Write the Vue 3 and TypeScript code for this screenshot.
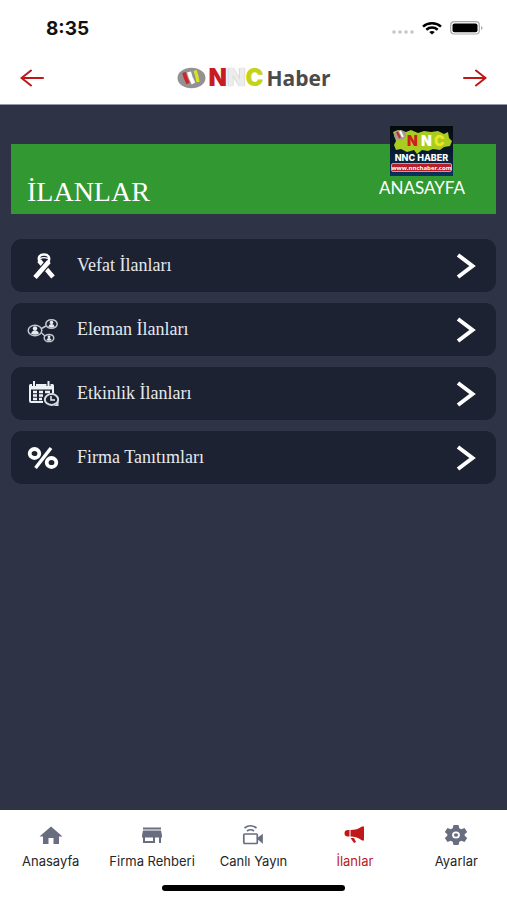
<script setup lang="ts">
type IconName = 'ribbon' | 'people' | 'calendar' | 'percent'
type TabIcon = 'home' | 'store' | 'video' | 'horn' | 'gear'

interface Listing {
  label: string
  icon: IconName
}

interface Tab {
  label: string
  icon: TabIcon
  active?: boolean
}

const listings: Listing[] = [
  { label: 'Vefat İlanları', icon: 'ribbon' },
  { label: 'Eleman İlanları', icon: 'people' },
  { label: 'Etkinlik İlanları', icon: 'calendar' },
  { label: 'Firma Tanıtımları', icon: 'percent' },
]

const tabs: Tab[] = [
  { label: 'Anasayfa', icon: 'home' },
  { label: 'Firma Rehberi', icon: 'store' },
  { label: 'Canlı Yayın', icon: 'video' },
  { label: 'İlanlar', icon: 'horn', active: true },
  { label: 'Ayarlar', icon: 'gear' },
]
</script>

<template>
  <div class="app">
    <div class="status">
      <span class="clock">8:35</span>
      <div class="signals">
        <svg class="cellular" width="22" height="4" viewBox="0 0 22 4" fill="#c6c6c8">
          <circle cx="2" cy="2" r="1.800" /><circle cx="8" cy="2" r="1.800" /><circle cx="14" cy="2" r="1.800" /><circle cx="20" cy="2" r="1.800" />
        </svg>
        <svg width="20" height="13" viewBox="0 0 20 13" fill="none" stroke="#000" stroke-width="2.500">
          <path d="M1 4.600C6 0.200 14 0.200 19 4.600" />
          <path d="M4.300 7.700C7.500 4.900 12.500 4.900 15.700 7.700" />
          <path d="M7.200 10.100C9 8.600 11 8.600 12.800 10.100L10 12.600Z" fill="#000" stroke="none" />
        </svg>
        <svg width="33" height="14" viewBox="0 0 33 14">
          <rect x="0.700" y="0.700" width="28.600" height="12.300" rx="3.500" fill="none" stroke="#a9a9ab" stroke-width="1.200" />
          <rect x="2.500" y="2.500" width="25" height="8.700" rx="2" fill="#000" />
          <path d="M31 5v4c2-.8 2-3.200 0-4" fill="#a9a9ab" />
        </svg>
      </div>
    </div>

    <header class="topbar">
      <button class="arrow" type="button" aria-label="Geri">
        <svg width="24" height="18" viewBox="0 0 24 18"><path d="M23 9H2M11 1.500L1.500 9L11 16.500" /></svg>
      </button>
      <a class="brand" href="#">
        <svg width="29" height="22" viewBox="0 0 29 22">
          <ellipse cx="14.500" cy="11" rx="14" ry="10.300" fill="#929292" />
          <path d="M7 5.500Q8 10 11 16.500" stroke="#d3222a" stroke-width="3.600" fill="none" />
          <path d="M12 5Q13 10 16.500 16.500" stroke="#fff" stroke-width="4" fill="none" />
          <path d="M18 3.500Q20 8 21 15" stroke="#dce51c" stroke-width="3.200" fill="none" />
        </svg>
        <span class="nnc"><b class="red">N</b><b class="pale">N</b><b class="lime">C</b></span>
        <span class="haber">Haber</span>
      </a>
      <button class="arrow" type="button" aria-label="İleri">
        <svg width="24" height="18" viewBox="0 0 24 18"><path d="M1 9H22M13 1.500L22.500 9L13 16.500" /></svg>
      </button>
    </header>

    <main class="content">
      <section class="banner">
        <h1>İLANLAR</h1>
        <a class="home-link" href="#">
          <svg width="63" height="50" viewBox="0 0 63 50">
            <defs>
              <linearGradient id="tile" x1="0" y1="0" x2="0" y2="1">
                <stop offset="0" stop-color="#050a0c" /><stop offset="0.500" stop-color="#071a2c" /><stop offset="1" stop-color="#08345e" />
              </linearGradient>
            </defs>
            <rect width="63" height="50" fill="url(#tile)" />
            <path d="M3 6l5-2 8 2 5-2 7 3 6-2 7 1 7-1 6 3 4-2 1 6 3 3-2 5-6 1-4 3-7-1-5 2-6-1-5 4-3-4-7 2-6-3-5 1-2-5 2-4z" fill="#a8cd20" />
            <ellipse cx="10" cy="9" rx="6" ry="5" fill="#a49a92" />
            <path d="M7 6l3 6" stroke="#c52828" stroke-width="2" /><path d="M10 5l3 6" stroke="#fff" stroke-width="2" />
            <g font-family="Inter, sans-serif" font-weight="900">
              <g font-size="14"><text x="17" y="20" fill="#cf1d20">N</text><text x="31" y="20" fill="#fff">N</text><text x="44" y="20" fill="#f0e421">C</text></g>
              <text x="31.500" y="35" font-size="9" font-weight="800" fill="#fff" text-anchor="middle">NNC HABER</text>
            </g>
            <rect x="1.500" y="37.500" width="60" height="8" rx="1.500" fill="#b51f2c" stroke="#d8bcc1" stroke-width="0.800" />
            <text x="31.500" y="43.500" font-family="Open Sans, sans-serif" font-weight="700" font-size="6" fill="#fff" text-anchor="middle">www.nnchaber.com</text>
          </svg>
          <span>ANASAYFA</span>
        </a>
      </section>

      <nav class="listings" aria-label="İlanlar">
        <a v-for="item in listings" :key="item.icon" class="listing" href="#">
          <svg width="32" height="28" viewBox="0 0 32 28">
            <g v-if="item.icon === 'ribbon'" fill="none" stroke="#fff">
              <path d="M12 8.500L26 25" stroke-width="4.600" />
              <path d="M22.500 9L8 25.500" stroke="#1c2231" stroke-width="7" />
              <path d="M22 9.500L8 25.500" stroke-width="4.600" />
              <path d="M12.500 9.500C10.500 5 13 2.500 17 2.500S23.500 5 21.500 10" stroke-width="2.400" />
              <path d="M13 6.500Q17 4.800 21 6.500" stroke-width="1.400" />
            </g>
            <g v-else-if="item.icon === 'people'" fill="none" stroke="#c3c7d2" stroke-width="1.500">
              <ellipse cx="8" cy="14.500" rx="6.800" ry="5.300" /><ellipse cx="24.500" cy="8" rx="5.700" ry="4.300" /><ellipse cx="22" cy="22" rx="4.800" ry="3.600" />
              <path d="M14.500 12.500L19 10M14.500 17L18 20" />
              <g fill="#e8eaf0" stroke="none">
                <circle cx="8" cy="12.500" r="2.200" /><path d="M4 17.500q1-3 4-3t4 3q-4 2.500-8 0z" />
                <circle cx="24.500" cy="6.500" r="1.800" /><path d="M21.300 10.500q1-2.400 3.200-2.400t3.200 2.400q-3.200 2-6.400 0z" />
                <circle cx="22" cy="20.800" r="1.400" /><path d="M19.500 24q.8-2 2.500-2t2.500 2q-2.500 1.400-5 0z" />
              </g>
            </g>
            <g v-else-if="item.icon === 'calendar'">
              <path d="M3.500 4h22q1.500 0 1.500 1.500v8h-2v-4H4v11.500h12v2H4q-2 0-2-2V5.500Q2 4 3.500 4z" fill="#edf0f5" />
              <path d="M7 1v5M21.500 1v5" stroke="#1c2231" stroke-width="4" /><path d="M7 1v5M21.500 1v5" stroke="#edf0f5" stroke-width="2" />
              <path d="M6 12h4M12 12h4M18 12h5M6 15.500h4M12 15.500h4M6 19h4M12 19h3" stroke="#edf0f5" stroke-width="2.300" />
              <ellipse cx="24.500" cy="19.500" rx="6.700" ry="5.400" fill="#1c2231" stroke="#d8dbe4" stroke-width="2" />
              <path d="M31.500 18v8H24.500q5 0 7-5z" fill="#d8dbe4" /><path d="M24 16v4h4" fill="none" stroke="#edf0f5" stroke-width="1.500" />
            </g>
            <g v-else fill="none" stroke="#fff">
              <ellipse cx="7.500" cy="9.500" rx="4.800" ry="4.500" stroke-width="3.800" /><ellipse cx="24.500" cy="18.500" rx="4.800" ry="4.500" stroke-width="3.800" />
              <path d="M24 4L8.500 24" stroke-width="3.400" />
            </g>
          </svg>
          <span class="listing-label">{{ item.label }}</span>
          <svg width="20" height="28" viewBox="0 0 20 28"><path d="M2 3L16.500 14L2 25" fill="none" stroke="#fff" stroke-width="4" /></svg>
        </a>
      </nav>
    </main>

    <footer class="footer">
      <nav class="tabs" aria-label="Ana menü">
        <a v-for="tab in tabs" :key="tab.icon" class="tab" :class="{ active: tab.active }" href="#">
          <svg width="24" height="22" viewBox="0 0 24 22">
            <path v-if="tab.icon === 'home'" d="M12 2.500L.500 12.500H4V20h5.500v-6h5v6H20v-7.500h3.500z" fill="currentColor" />
            <path v-else-if="tab.icon === 'store'" d="M3 3.500h18v2H3zM3 6.500h18l1 5v2h-1V19h-2v-5.500h-4V19H3v-5.500H2v-2zM5 13.500V17h8v-3.500z" fill="currentColor" fill-rule="evenodd" />
            <g v-else-if="tab.icon === 'video'" fill="none" stroke="currentColor" stroke-width="1.700">
              <path d="M3.500 4Q9.500-.500 15.500 4M6 7q3.500-2.500 7 0" /><rect x="2.800" y="10" width="13.500" height="9.500" rx="1" />
              <path d="M17 14.500l4-3v6.500z" fill="currentColor" />
            </g>
            <path v-else-if="tab.icon === 'horn'" d="M6.500 6v6.500H5Q1.500 12.500 1.500 9.300T5 6zM7.500 6Q14 6 19 2.500h2v14H19q-5-4-11.500-4zM7.500 14h3.500l2 4-2 1z" fill="currentColor" />
            <g v-else>
              <path d="M9.500 1h5l.8 3.200 2 1.100 3.200-1.200 2.700 3.800-2.500 2.300v1.600l2.500 2.300-2.700 3.800-3.200-1.200-2 1.100-.8 3.200h-5l-.8-3.200-2-1.100-3.200 1.200L.800 14.100l2.500-2.300v-1.600L.800 7.900l2.700-3.800 3.200 1.200 2-1.100z" fill="currentColor" />
              <ellipse cx="12" cy="11" rx="3" ry="2.700" fill="none" stroke="#fff" stroke-width="1.800" />
            </g>
          </svg>
          <span>{{ tab.label }}</span>
        </a>
      </nav>
      <div class="home-indicator"></div>
    </footer>
  </div>
</template>

<style>
body {
  margin: 0;
}
</style>

<style scoped>
.app {
  display: flex;
  flex-direction: column;
  min-height: 100vh;
  background: #2e3346;
  font-family: Inter, sans-serif;
}

.status {
  display: flex;
  align-items: center;
  justify-content: space-between;
  height: 56px;
  padding: 0 24px 0 46px;
  background: #fff;
}

.clock {
  font-size: 19px;
  font-weight: 700;
  color: #111;
}

.signals {
  display: flex;
  align-items: center;
  gap: 8px;
}

.cellular {
  margin-top: 8px;
}

.topbar {
  display: flex;
  align-items: center;
  justify-content: space-between;
  box-sizing: border-box;
  height: 49px;
  padding: 0 18px 5px;
  border-bottom: 1px solid #9298a8;
  background: #fff;
}

.arrow {
  display: flex;
  padding: 2px;
  border: 0;
  background: none;
}

.arrow path {
  fill: none;
  stroke: #bd1717;
  stroke-width: 2;
  stroke-linecap: round;
}

.brand {
  display: flex;
  align-items: center;
  gap: 3px;
  text-decoration: none;
  line-height: 24px;
}

.nnc {
  display: flex;
  font-size: 24px;
}

.nnc b {
  font-weight: 900;
}

.red {
  color: #c91c20;
}

.pale {
  color: #ececec;
  text-shadow: 0 0 1px #999;
}

.lime {
  color: #c3d317;
}

.haber {
  font-family: "Open Sans", sans-serif;
  font-size: 21px;
  font-weight: 700;
  color: #4b4b4b;
}

.content {
  flex: 1;
  padding: 39px 11px 24px;
}

.banner {
  display: flex;
  align-items: flex-end;
  justify-content: space-between;
  height: 70px;
  padding: 0 31px 0 16px;
  background: #329932;
  color: #fff;
}

h1 {
  margin: 0 0 7px;
  font-family: "Liberation Serif", serif;
  font-size: 28px;
  font-weight: 400;
  line-height: 30px;
}

.home-link {
  display: flex;
  flex-direction: column;
  align-items: center;
  gap: 2px;
  padding-bottom: 16px;
  color: #fff;
  font-family: Lato, sans-serif;
  font-size: 17px;
  line-height: 20px;
  text-decoration: none;
}

.listings {
  display: grid;
  gap: 11px;
  margin-top: 25px;
}

.listing {
  display: flex;
  align-items: center;
  height: 53px;
  padding: 0 20px 0 16px;
  border-radius: 11px;
  background: #1c2231;
  color: #e6e8ef;
  font-family: "Liberation Serif", serif;
  font-size: 18px;
  text-decoration: none;
}

.listing-label {
  flex: 1;
  margin-left: 18px;
}

.footer {
  padding: 14px 0 9px;
  background: #fff;
}

.tabs {
  display: grid;
  grid-template-columns: repeat(5, 1fr);
}

.tab {
  display: flex;
  flex-direction: column;
  align-items: center;
  gap: 7px;
  color: #686d80;
  font-size: 13px;
  line-height: 16px;
  text-decoration: none;
  white-space: nowrap;
}

.tab span {
  color: #262626;
}

.tab.active,
.tab.active span {
  color: #c01818;
}

.home-indicator {
  width: 36%;
  height: 6px;
  margin: 16px auto 0;
  border-radius: 3px;
  background: #000;
}
</style>
